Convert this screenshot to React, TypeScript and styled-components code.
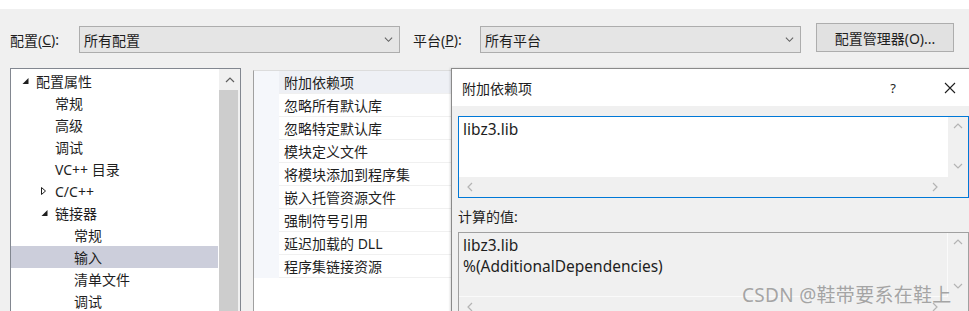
import React from 'react';
import styled, { createGlobalStyle } from 'styled-components';

const GlobalStyle = createGlobalStyle`
  html, body {
    margin: 0;
    padding: 0;
    overflow: hidden;
    background: #f0f0f0;
  }
  body {
    font-family: "Noto Sans", "Noto Sans CJK SC", sans-serif;
    font-size: 14px;
    color: #1e1e1e;
  }
`;

const Page = styled.div`
  position: relative;
  width: 969px;
  height: 311px;
  overflow: hidden;
  background: #f0f0f0;
  border-top: 9px solid #ffffff;
  box-sizing: border-box;
`;

const Toolbar = styled.div`
  display: flex;
  align-items: flex-start;
  padding: 17px 0 0 10px;
  height: 44px;
  box-sizing: border-box;
`;

const Label = styled.span<{ $gap?: number }>`
  display: flex;
  align-items: center;
  height: 27px;
  width: ${p => p.$gap ?? 69}px;
  flex-shrink: 0;
  white-space: nowrap;
  u { text-decoration: underline; }
`;

const Combo = styled.div<{ $width: number }>`
  display: flex;
  align-items: center;
  justify-content: space-between;
  width: ${p => p.$width}px;
  height: 27px;
  box-sizing: border-box;
  background: #e5e5e5;
  border: 1px solid #adadad;
  padding: 0 6px 0 4px;
  margin-right: 13px;
  flex-shrink: 0;
`;

const Button = styled.div`
  display: flex;
  align-items: center;
  justify-content: center;
  width: 138px;
  height: 29px;
  margin: -3px 0 0 2px;
  box-sizing: border-box;
  background: #e1e1e1;
  border: 1px solid #adadad;
`;

const Main = styled.div`
  display: flex;
  align-items: flex-start;
  gap: 12px;
  padding-left: 10px;
  margin-top: 15px;
`;

const TreePanel = styled.div`
  display: flex;
  width: 231px;
  height: 260px;
  box-sizing: border-box;
  background: #ffffff;
  border: 1px solid #828790;
  flex-shrink: 0;
`;

const TreeList = styled.div`
  flex: 1;
  padding-top: 1px;
`;

const TreeRow = styled.div<{ $level: number; $selected?: boolean }>`
  display: flex;
  align-items: center;
  height: 22px;
  padding-left: ${p => 6 + p.$level * 19}px;
  margin-right: 1px;
  background: ${p => (p.$selected ? '#cccedb' : 'transparent')};
  white-space: nowrap;
`;

const Expander = styled.span`
  display: inline-flex;
  align-items: center;
  width: 19px;
  height: 22px;
  flex-shrink: 0;
`;

const VScroll = styled.div`
  display: flex;
  flex-direction: column;
  width: 21px;
  background: #f0f0f0;
  flex-shrink: 0;
`;

const ScrollBtn = styled.div`
  display: flex;
  align-items: center;
  justify-content: center;
  height: 21px;
  flex-shrink: 0;
`;

const Thumb = styled.div`
  flex: 1;
  width: 19px;
  background: #cdcdcd;
`;

const Grid = styled.div`
  flex: 1;
  margin-top: 2px;
  height: 260px;
  background: #ffffff;
  border-top: 1px solid #dcdcdc;
  border-left: 1px solid #a0a0a0;
`;

const GridRow = styled.div<{ $selected?: boolean }>`
  display: flex;
  height: 23px;
  background: ${p => (p.$selected ? '#eef0f5' : '#ffffff')};
`;

const Margin = styled.div`
  width: 25px;
  background: #f5f7fb;
  flex-shrink: 0;
`;

const Cell = styled.div`
  flex: 1;
  display: flex;
  align-items: center;
  padding-left: 5px;
  border-bottom: 1px solid #f0f0f0;
  white-space: nowrap;
`;

const Dialog = styled.div`
  position: absolute;
  left: 451px;
  top: 59px;
  right: -20px;
  bottom: -20px;
  background: #f0f0f0;
  border: 1px solid #8a8a8a;
  box-shadow: -1px 0 2px rgba(0, 0, 0, 0.15);
`;

const TitleBar = styled.div`
  display: flex;
  align-items: center;
  height: 37px;
  padding-left: 10px;
  background: #ffffff;
`;

const Title = styled.span`
  flex: 1;
`;

const TitleBtn = styled.span<{ $width: number }>`
  display: flex;
  align-items: center;
  justify-content: center;
  width: ${p => p.$width}px;
  font-size: 13px;
  flex-shrink: 0;
`;

const Body = styled.div`
  padding: 10px 0 0 6px;
`;

const EditBox = styled.div<{ $active?: boolean }>`
  display: grid;
  grid-template-columns: 1fr 20px;
  grid-template-rows: 1fr 20px;
  width: 511px;
  height: ${p => (p.$active ? 82 : 86)}px;
  box-sizing: border-box;
  border: 1px solid ${p => (p.$active ? '#0078d7' : '#a0a0a0')};
  background: #f0f0f0;
`;

const EditText = styled.div<{ $active?: boolean }>`
  padding: 2px 0 0 4px;
  font-size: 15.5px;
  line-height: 21px;
  background: ${p => (p.$active ? '#ffffff' : '#f0f0f0')};
  border-right: ${p => (p.$active ? 'none' : '1px solid #fafafa')};
  border-bottom: ${p => (p.$active ? 'none' : '1px solid #fafafa')};
`;

const ScrollCol = styled.div`
  display: flex;
  flex-direction: column;
  justify-content: space-between;
  align-items: center;
  padding: 4px 0 6px;
`;

const ScrollRow = styled.div`
  display: flex;
  justify-content: space-between;
  align-items: center;
  padding: 0 8px 0 6px;
`;

const SectionLabel = styled.div`
  height: 21px;
  margin: 7px 0 6px;
  display: flex;
  align-items: center;
`;

const Watermark = styled.div`
  position: absolute;
  left: 742px;
  top: 271px;
  font-size: 19px;
  color: rgba(150, 150, 150, 0.85);
  white-space: nowrap;
  letter-spacing: 0.3px;
`;

type Dir = 'up' | 'down' | 'left' | 'right';

const Chevron: React.FC<{ dir: Dir; color?: string; size?: number }> = ({ dir, color = '#b4b4b4', size = 10 }) => {
  const paths: Record<Dir, string> = {
    up: 'M1 7 L5 3 L9 7',
    down: 'M1 3 L5 7 L9 3',
    left: 'M7 1 L3 5 L7 9',
    right: 'M3 1 L7 5 L3 9',
  };
  return (
    <svg width={size} height={size} viewBox="0 0 10 10">
      <path d={paths[dir]} fill="none" stroke={color} strokeWidth="1.2" />
    </svg>
  );
};

const Triangle: React.FC<{ open: boolean }> = ({ open }) =>
  open ? (
    <svg width="12" height="12" viewBox="0 0 12 12" style={{ marginLeft: 3 }}>
      <path d="M8.5 3 L8.5 9 L2.5 9 Z" fill="#1e1e1e" />
    </svg>
  ) : (
    <svg width="12" height="12" viewBox="0 0 12 12" style={{ marginLeft: 2 }}>
      <path d="M3.5 2.5 L7.5 6 L3.5 9.5 Z" fill="none" stroke="#1e1e1e" strokeWidth="1" />
    </svg>
  );

interface TreeNode {
  label: string;
  level: number;
  expander?: 'open' | 'closed';
  selected?: boolean;
}

const treeNodes: TreeNode[] = [
  { label: '配置属性', level: 0, expander: 'open' },
  { label: '常规', level: 1 },
  { label: '高级', level: 1 },
  { label: '调试', level: 1 },
  { label: 'VC++ 目录', level: 1 },
  { label: 'C/C++', level: 1, expander: 'closed' },
  { label: '链接器', level: 1, expander: 'open' },
  { label: '常规', level: 2 },
  { label: '输入', level: 2, selected: true },
  { label: '清单文件', level: 2 },
  { label: '调试', level: 2 },
  { label: '系统', level: 2 },
];

const properties = [
  '附加依赖项',
  '忽略所有默认库',
  '忽略特定默认库',
  '模块定义文件',
  '将模块添加到程序集',
  '嵌入托管资源文件',
  '强制符号引用',
  '延迟加载的 DLL',
  '程序集链接资源',
];

const App: React.FC = () => (
  <>
    <GlobalStyle />
    <Page>
      <Toolbar>
        <Label>配置(<u>C</u>):</Label>
        <Combo $width={321}>
          <span>所有配置</span>
          <Chevron dir="down" color="#606060" size={9} />
        </Combo>
        <Label $gap={67}>平台(<u>P</u>):</Label>
        <Combo $width={321}>
          <span>所有平台</span>
          <Chevron dir="down" color="#606060" size={9} />
        </Combo>
        <Button>配置管理器(O)...</Button>
      </Toolbar>

      <Main>
        <TreePanel>
          <TreeList>
            {treeNodes.map((n, i) => (
              <TreeRow key={i} $level={n.level} $selected={n.selected}>
                <Expander>{n.expander && <Triangle open={n.expander === 'open'} />}</Expander>
                {n.label}
              </TreeRow>
            ))}
          </TreeList>
          <VScroll>
            <ScrollBtn>
              <Chevron dir="up" color="#606060" />
            </ScrollBtn>
            <Thumb />
          </VScroll>
        </TreePanel>

        <Grid>
          {properties.map((p, i) => (
            <GridRow key={p} $selected={i === 0}>
              <Margin />
              <Cell>{p}</Cell>
            </GridRow>
          ))}
        </Grid>
      </Main>

      <Dialog>
        <TitleBar>
          <Title>附加依赖项</Title>
          <TitleBtn $width={70}>?</TitleBtn>
          <TitleBtn $width={44}>
            <svg width="12" height="12" viewBox="0 0 12 12">
              <path d="M1 1 L11 11 M11 1 L1 11" stroke="#1e1e1e" strokeWidth="1.1" />
            </svg>
          </TitleBtn>
          <TitleBtn $width={16} />
        </TitleBar>
        <Body>
          <EditBox $active>
            <EditText $active>libz3.lib</EditText>
            <ScrollCol>
              <Chevron dir="up" />
              <Chevron dir="down" />
            </ScrollCol>
            <ScrollRow>
              <Chevron dir="left" />
              <Chevron dir="right" />
            </ScrollRow>
            <div />
          </EditBox>
          <SectionLabel>计算的值:</SectionLabel>
          <EditBox>
            <EditText>
              libz3.lib
              <br />
              %(AdditionalDependencies)
            </EditText>
            <ScrollCol>
              <Chevron dir="up" />
              <Chevron dir="down" />
            </ScrollCol>
            <ScrollRow>
              <Chevron dir="left" />
              <Chevron dir="right" />
            </ScrollRow>
            <div />
          </EditBox>
        </Body>
      </Dialog>

      <Watermark>CSDN @鞋带要系在鞋上</Watermark>
    </Page>
  </>
);

export default App;
